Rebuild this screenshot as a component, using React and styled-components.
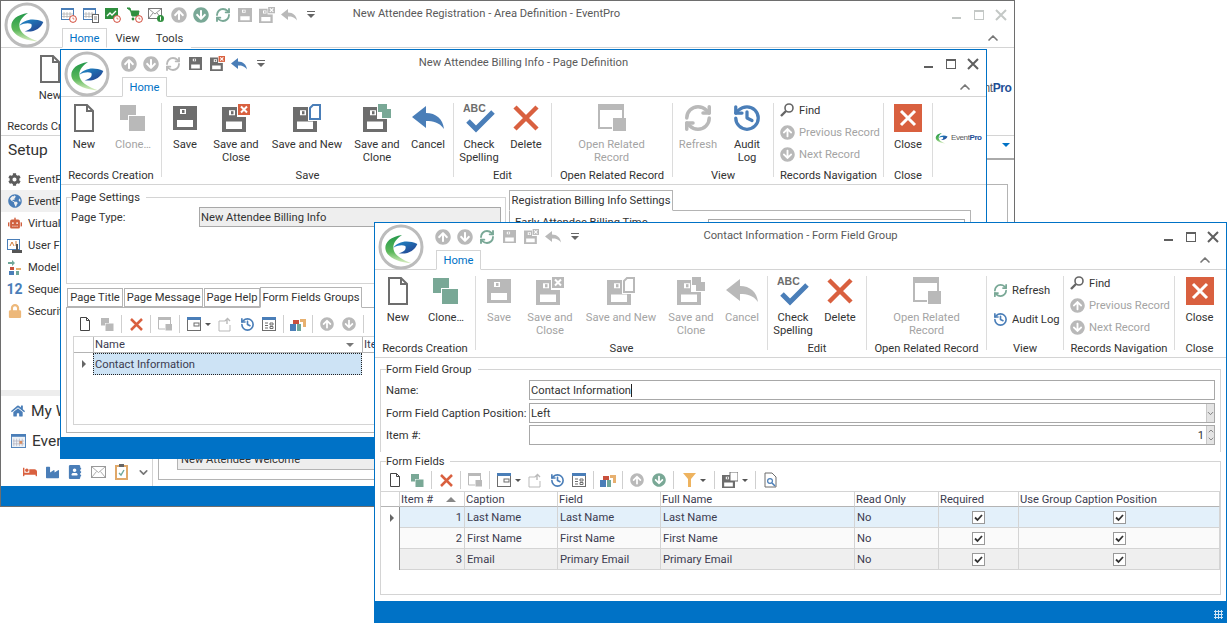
import React from "react";
import styled, { createGlobalStyle } from "styled-components";
import { RefreshCw, History, ChevronUp, ChevronDown } from "lucide-react";
import {
	FaArrowCircleUp,
	FaArrowCircleDown,
	FaCog,
	FaGlobeAmericas,
	FaRobot,
	FaLock,
	FaHome,
	FaBed,
	FaIndustry,
	FaAddressBook,
} from "react-icons/fa";

const BLUE = "#0072c6";
const DARK = "#6d6d6d";
const OFF = "#b9b9b9";
const STEEL = "#4a7eb8";
const TEAL = "#79a896";
const RED = "#d9603f";

const GlobalStyle = createGlobalStyle`
	html, body {
		margin: 0;
		padding: 0;
		background: #fff;
	}
	body {
		font-family: Roboto, "Open Sans", sans-serif;
		font-size: 11.2px;
		color: #333;
	}
	* {
		box-sizing: border-box;
	}
`;

const Desktop = styled.div`
	position: relative;
	width: 1227px;
	height: 623px;
	overflow: hidden;
	background: #fff;
`;

const Window = styled.div`
	position: absolute;
	left: ${(p) => p.$left}px;
	top: ${(p) => p.$top}px;
	width: ${(p) => p.$width}px;
	height: ${(p) => p.$height}px;
	display: flex;
	flex-direction: column;
	background: #fff;
	border: 1px solid ${(p) => (p.$active ? BLUE : "#6e6e6e")};
	overflow: hidden;
`;

const LogoSpot = styled.div`
	position: absolute;
	left: 3px;
	top: 1px;
	width: 46px;
	height: 46px;
`;

const TitleRow = styled.div`
	flex: none;
	height: 27px;
	display: grid;
	grid-template-columns: 1fr auto 1fr;
	align-items: center;
`;

const QuickBar = styled.div`
	display: flex;
	align-items: center;
	padding-left: 57px;
`;

const QuickSlot = styled.div`
	width: 22px;
	height: 22px;
	display: flex;
	align-items: center;
	justify-content: center;
`;

const Title = styled.div`
	color: #5a5a5a;
	padding-right: ${(p) => p.$shift || 0}px;
	padding-bottom: 2px;
	white-space: nowrap;
`;

const WinButtons = styled.div`
	display: flex;
	justify-content: flex-end;
	padding-right: 2px;
`;

const TabRow = styled.div`
	flex: none;
	height: 20px;
	display: flex;
	align-items: flex-end;
	padding-left: ${(p) => p.$left || 61}px;
	padding-right: 13px;
	border-bottom: 1px solid #d4d4d4;
`;

const RibbonTab = styled.div`
	height: 20px;
	width: ${(p) => p.$w}px;
	margin-bottom: -1px;
	display: flex;
	align-items: center;
	justify-content: center;
	background: #fff;
	color: ${(p) => (p.$on ? BLUE : "#333")};
	border: 1px solid ${(p) => (p.$on ? "#d4d4d4" : "transparent")};
	border-bottom: 1px solid ${(p) => (p.$on ? "#fff" : "transparent")};
`;

const Collapse = styled.div`
	margin-left: auto;
	align-self: center;
	display: flex;
	color: #777;
`;

const Ribbon = styled.div`
	flex: none;
	height: 88px;
	display: flex;
	border-bottom: 1px solid #d4d4d4;
`;

const Group = styled.div`
	flex: none;
	width: ${(p) => p.$w}px;
	display: flex;
	flex-direction: column;
`;

const GroupItems = styled.div`
	height: 72px;
	display: flex;
`;

const GroupLabel = styled.div`
	height: 13px;
	line-height: 13px;
	text-align: center;
	white-space: nowrap;
`;

const GroupSep = styled.div`
	flex: none;
	width: 1px;
	height: 74px;
	margin-top: 6px;
	background: #dcdcdc;
`;

const BigButton = styled.div`
	flex: none;
	width: ${(p) => p.$w}px;
	padding-top: 6px;
	display: flex;
	flex-direction: column;
	align-items: center;
	color: ${(p) => (p.$off ? "#a4a4a4" : "#333")};
`;

const BigIcon = styled.div`
	height: 30px;
	display: flex;
	align-items: center;
	justify-content: center;
`;

const BigText = styled.div`
	margin-top: 5px;
	line-height: 13px;
	text-align: center;
	white-space: pre-line;
`;

const Stack = styled.div`
	display: flex;
	flex-direction: column;
	gap: ${(p) => p.$gap}px;
	padding-top: ${(p) => p.$top}px;
	padding-left: 5px;
`;

const SmallButton = styled.div`
	height: 22px;
	display: flex;
	align-items: center;
	gap: 4px;
	white-space: nowrap;
	color: ${(p) => (p.$off ? "#a4a4a4" : "#333")};
`;

const SmallIcon = styled.div`
	width: 16px;
	display: flex;
	justify-content: center;
`;

const BrandWrap = styled.div`
	margin-left: ${(p) => p.$left || 0}px;
	display: flex;
	align-items: center;
	gap: 1px;
	height: 80px;
	flex: none;
`;

const BrandText = styled.span`
	font-family: "Liberation Sans", sans-serif;
	font-size: ${(p) => p.$size}px;
	letter-spacing: -0.4px;
	color: #5b5b5b;
	b {
		color: #1f4f96;
	}
`;

const Body = styled.div`
	flex: 1;
	min-height: 0;
	position: relative;
	overflow: hidden;
	display: flex;
`;

const StatusBar = styled.div`
	flex: none;
	height: ${(p) => p.$h}px;
	background: ${BLUE};
	display: flex;
	align-items: flex-end;
	justify-content: flex-end;
	padding: 0 3px 3px 0;
`;

const Grip = styled.div`
	width: 9px;
	height: 9px;
	background-image: radial-gradient(#cfe4f5 1px, transparent 1.2px);
	background-size: 3px 3px;
`;

/* main window left nav */
const Nav = styled.div`
	flex: none;
	width: 152px;
	height: 100%;
	display: flex;
	flex-direction: column;
	border-right: 1px solid #d4d4d4;
`;

const NavTitle = styled.div`
	height: 32px;
	padding: 4px 0 0 7px;
	font-size: 15.5px;
	line-height: 20px;
`;

const NavItem = styled.div`
	height: 22px;
	display: flex;
	align-items: center;
	gap: 6px;
	padding-left: 6px;
	white-space: nowrap;
	background: ${(p) => (p.$on ? "#f0f0f0" : "transparent")};
`;

const NavIcon = styled.div`
	width: 15px;
	display: flex;
	justify-content: center;
	font-weight: 700;
	font-size: 14px;
	color: ${STEEL};
`;

const NavSplit = styled.div`
	margin-top: auto;
	height: 6px;
	background: #ededed;
`;

const NavLink = styled.div`
	height: 30px;
	display: flex;
	align-items: center;
	gap: 6px;
	padding-left: 10px;
	font-size: 15.5px;
`;

const Tray = styled.div`
	height: 28px;
	margin-top: 2px;
	padding-left: 22px;
	display: flex;
	align-items: center;
	gap: 9px;
`;

const MainPane = styled.div`
	flex: 1;
	display: flex;
	flex-direction: column;
	min-width: 0;
`;

const PaneHeader = styled.div`
	height: 24px;
	padding: 7px 4px 0 0;
	display: flex;
	justify-content: flex-end;
	border-bottom: 2px solid #aaa;
`;

const Arrow = styled.div`
	width: 0;
	height: 0;
	border-left: ${(p) => p.$s}px solid transparent;
	border-right: ${(p) => p.$s}px solid transparent;
	border-top: ${(p) => p.$s}px solid ${(p) => p.$c || "#555"};
`;

const PaneBox = styled.div`
	flex: 1;
	margin: 24px 6px 6px 5px;
	border: 1px solid #b4b4b4;
	display: flex;
	flex-direction: column;
	justify-content: flex-end;
	padding: 0 18px 9px;
`;

const FlatField = styled.div`
	height: 20px;
	padding-left: 3px;
	line-height: 18px;
	border: 1px solid #b4b4b4;
	background: #eee;
	white-space: nowrap;
	overflow: hidden;
`;

/* forms */
const Columns = styled.div`
	display: flex;
	width: 100%;
`;

const LeftColumn = styled.div`
	flex: none;
	width: 445px;
	padding: 6px 0 0 5px;
	display: flex;
	flex-direction: column;
`;

const RightColumn = styled.div`
	flex: none;
	width: 462px;
	margin-left: 3px;
	padding-top: 5px;
`;

const Box = styled.fieldset`
	margin: 0;
	padding: ${(p) => p.$pad || "0 5px"};
	min-width: 0;
	height: ${(p) => p.$h}px;
	border: 1px solid #d4d4d4;
	border-bottom: ${(p) => (p.$open ? "none" : "1px solid #d4d4d4")};
	legend {
		padding: 0 6px 0 0;
		margin-left: ${(p) => p.$lg || 0}px;
		line-height: 13px;
	}
`;

const FieldRow = styled.div`
	display: grid;
	grid-template-columns: ${(p) => p.$label}px 1fr;
	align-items: center;
	height: ${(p) => p.$h || 20}px;
	margin-top: ${(p) => p.$before || 0}px;
	margin-bottom: ${(p) => p.$after || 0}px;
`;

const Input = styled.div`
	height: 20px;
	display: flex;
	align-items: center;
	padding-left: 1px;
	border: 1px solid #a8a8a8;
	background: ${(p) => (p.$flat ? "#eee" : "#fff")};
	white-space: nowrap;
	overflow: hidden;
`;

const Caret = styled.span`
	display: inline-block;
	width: 1px;
	height: 13px;
	background: #222;
`;

const InputValue = styled.div`
	flex: 1;
	text-align: ${(p) => (p.$right ? "right" : "left")};
	padding-right: 2px;
`;

const SpinColumn = styled.div`
	flex: none;
	width: 8px;
	height: 100%;
	background: #e4e4e4;
	border-left: 1px solid #c8c8c8;
	display: flex;
	flex-direction: column;
	align-items: center;
	justify-content: center;
	color: #777;
`;

const TabStrip = styled.div`
	display: flex;
	align-items: flex-end;
	height: 21px;
	margin-top: 2px;
	position: relative;
`;

const PageTab = styled.div`
	height: ${(p) => (p.$on ? 21 : 19)}px;
	width: ${(p) => p.$w}px;
	margin-left: ${(p) => (p.$on ? 0 : 1)}px;
	margin-bottom: ${(p) => (p.$on ? -1 : 0)}px;
	display: ${(p) => (p.$inline ? "inline-flex" : "flex")};
	align-items: center;
	justify-content: center;
	white-space: nowrap;
	background: #fff;
	border: 1px solid #b4b4b4;
	border-bottom: ${(p) => (p.$on ? "1px solid #fff" : "1px solid #b4b4b4")};
	position: relative;
	z-index: 1;
`;

const TabPanel = styled.div`
	height: ${(p) => p.$h}px;
	border: 1px solid #b4b4b4;
	padding: ${(p) => p.$pad || 0};
	overflow: hidden;
`;

const TinyBar = styled.div`
	display: flex;
	align-items: center;
	height: ${(p) => p.$h || 20}px;
	padding-left: ${(p) => p.$left || 0}px;
	margin-top: ${(p) => p.$top || 0}px;
`;

const Tool = styled.div`
	flex: none;
	width: ${(p) => p.$w || 22}px;
	display: flex;
	align-items: center;
	justify-content: center;
	gap: 4px;
`;

const ToolSep = styled.div`
	flex: none;
	width: 1px;
	height: 18px;
	margin: 0 3px;
	background: #cfcfcf;
`;

const DataGrid = styled.div`
	display: grid;
	margin-top: 1px;
	grid-template-columns: ${(p) => p.$cols};
	grid-template-rows: 16px;
	grid-auto-rows: ${(p) => p.$row}px;
`;

const HeadCell = styled.div`
	display: flex;
	align-items: center;
	justify-content: space-between;
	padding: 0 8px 0 1px;
	border-top: 1px solid #d4d4d4;
	border-bottom: 1px solid #b4b4b4;
	border-right: 1px solid #d4d4d4;
	white-space: nowrap;
	color: #3c3c50;
`;

const RowHead = styled.div`
	display: flex;
	align-items: center;
	padding-left: ${(p) => p.$inset || 9}px;
	border-right: ${(p) => (p.$plain ? "none" : "1px solid #8f8f8f")};
`;

const TriRight = styled.div`
	width: 0;
	height: 0;
	border-top: 4px solid transparent;
	border-bottom: 4px solid transparent;
	border-left: 4px solid #666;
`;

const TriUp = styled.div`
	width: 0;
	height: 0;
	border-left: 5px solid transparent;
	border-right: 5px solid transparent;
	border-bottom: 5px solid #888;
`;

const Cell = styled.div`
	display: flex;
	align-items: center;
	justify-content: ${(p) => p.$align || "flex-start"};
	padding: 0 2px;
	background: ${(p) => p.$bg};
	border-right: 1px solid #d4d4d4;
	border-bottom: 1px solid #d4d4d4;
	color: #3c3c50;
	white-space: nowrap;
`;

const Checkbox = styled.div`
	width: 13px;
	height: 13px;
	background: #fff;
	border: 1px solid #999;
	display: flex;
	align-items: center;
	justify-content: center;
`;

const OldGrid = styled.div`
	height: 89px;
	border: 1px solid #d4d4d4;
	margin: 2px 0 0 6px;
`;

const OldHead = styled.div`
	height: 16px;
	display: grid;
	grid-template-columns: 19px 269px 1fr;
	border-bottom: 1px solid #b4b4b4;
`;

const OldHeadCell = styled.div`
	display: flex;
	align-items: center;
	justify-content: space-between;
	padding: 0 8px 0 1px;
	border-left: ${(p) => (p.$first ? "none" : "1px solid #b4b4b4")};
	color: #3c3c50;
`;

const OldRow = styled.div`
	height: 22px;
	display: grid;
	grid-template-columns: 19px 269px 1fr;
`;

const OldSelected = styled.div`
	display: flex;
	align-items: center;
	padding-left: 2px;
	background: #cde3f5;
	outline: 1px dotted #222;
	outline-offset: -1px;
	color: #3c3c50;
`;

const FormBody = styled.div`
	flex: 1;
	padding: 5px 5px 0 5px;
	display: flex;
	flex-direction: column;
	gap: 3px;
`;

function Floppy({ c, x = 0, y = 0, w = 24, h = 24 }) {
	return (
		<g transform={`translate(${x} ${y}) scale(${w / 24} ${h / 24})`}>
			<path
				fill={c}
				fillRule="evenodd"
				d="M0 0H24V24H0Z M7 3V8H13V3Z M4 14V21H20V14Z"
			/>
			<rect x="9" y="4" width="2.5" height="3" fill={c} />
		</g>
	);
}

const SaveIcon = ({ c, s = 24 }) => (
	<svg width={s} height={s} viewBox="0 0 24 24">
		<Floppy c={c} />
	</svg>
);

const SaveCloseIcon = ({ c, badge, s = 28 }) => (
	<svg width={s} height={s} viewBox="0 0 28 28">
		<Floppy c={c} y="3" h="25" />
		<rect x="15" y="-1" width="14" height="14" fill="#fff" />
		<rect x="16" y="0" width="12" height="11" fill={badge} />
		<path d="M19 2.5L25 8.5M25 2.5L19 8.5" stroke="#fff" strokeWidth="2" />
	</svg>
);

const SaveNewIcon = ({ c, badge, s = 28 }) => (
	<svg width={s} height={s} viewBox="0 0 28 28">
		<Floppy c={c} y="3" h="25" />
		<rect x="15" y="-1" width="14" height="18" fill="#fff" />
		<path d="M17 4L20 1H27V15H17Z" fill="#fff" stroke={badge} strokeWidth="2" />
	</svg>
);

const SaveCloneIcon = ({ c, badge, s = 28 }) => (
	<svg width={s} height={s} viewBox="0 0 28 28">
		<Floppy c={c} y="3" h="25" />
		<rect x="14" y="-1" width="15" height="16" fill="#fff" />
		<rect x="15" y="0" width="9" height="8" fill={badge} />
		<rect x="19" y="5" width="9" height="9" fill={badge} />
	</svg>
);

const DocIcon = ({ s = 28, c = DARK }) => (
	<svg width={(s * 20) / 28} height={s} viewBox="0 0 20 28">
		<path
			d="M1 1H13L19 7V27H1Z M13 1V7H19"
			fill="#fff"
			stroke={c}
			strokeWidth="2"
		/>
	</svg>
);

const CloneIcon = ({ c, s = 26 }) => (
	<svg width={s} height={s} viewBox="0 0 26 26">
		<rect x="0" y="0" width="16" height="15" fill={c} />
		<rect x="8" y="10" width="16" height="16" fill="#fff" />
		<rect x="9" y="11" width="16" height="15" fill={c} />
	</svg>
);

const BackIcon = ({ c, s = 32 }) => (
	<svg width={s} height={(s * 24) / 32} viewBox="0 0 32 24">
		<path fill={c} d="M0 11L14 0V7C24 7 31 13 32 23C27 16 21 15 14 15V22Z" />
	</svg>
);

const SpellIcon = () => (
	<svg width="32" height="30" viewBox="0 0 32 30">
		<text
			x="0"
			y="9"
			fontFamily="Liberation Sans, sans-serif"
			fontSize="10.5"
			fontWeight="700"
			fill="#6d6d6d"
		>
			ABC
		</text>
		<path d="M5 18L13 26L30 9" fill="none" stroke={STEEL} strokeWidth="5" />
	</svg>
);

const CrossIcon = ({ s = 26, w = 4.5 }) => (
	<svg width={s} height={s} viewBox="0 0 26 26">
		<path d="M2 2L24 24M24 2L2 24" stroke={RED} strokeWidth={w} />
	</svg>
);

const RelatedIcon = ({ c = OFF, s = 28 }) => (
	<svg width={s} height={s} viewBox="0 0 28 28">
		<path fill={c} d="M0 0H26V6H0Z" />
		<path fill="none" stroke={c} strokeWidth="2" d="M1 6V24H14M25 6V14" />
		<rect x="15" y="14" width="13" height="13" fill={c} />
	</svg>
);

const CloseTile = () => (
	<svg width="28" height="28" viewBox="0 0 28 28">
		<rect width="28" height="28" fill={RED} />
		<path d="M7 7L21 21M21 7L7 21" stroke="#fff" strokeWidth="3" />
	</svg>
);

const FindIcon = ({ c = "#666" }) => (
	<svg width="14" height="14" viewBox="0 0 14 14">
		<circle cx="9" cy="5" r="4" fill="none" stroke={c} strokeWidth="1.6" />
		<path d="M6 8L1 13" stroke={c} strokeWidth="2.4" />
	</svg>
);

const MinIcon = ({ c }) => (
	<svg width="22" height="22" viewBox="0 0 22 22">
		<rect x="6" y="13" width="9" height="2" fill={c} />
	</svg>
);

const MaxIcon = ({ c }) => (
	<svg width="22" height="22" viewBox="0 0 22 22">
		<rect x="6.5" y="6.5" width="9" height="9" fill="none" stroke={c} />
		<rect x="6" y="6" width="10" height="2" fill={c} />
	</svg>
);

const ShutIcon = ({ c }) => (
	<svg width="22" height="22" viewBox="0 0 22 22">
		<path d="M6 6L16 16M16 6L6 16" stroke={c} strokeWidth="2" />
	</svg>
);

const SmallDrop = () => (
	<svg width="8" height="8" viewBox="0 0 8 8">
		<rect x="0" y="0" width="8" height="1" fill="#666" />
		<path d="M0 3H8L4 7Z" fill="#666" />
	</svg>
);

const WindowTool = ({ c = DARK }) => (
	<svg width="14" height="14" viewBox="0 0 14 14">
		<rect x="0.5" y="0.5" width="13" height="13" fill="#fff" stroke={c} />
		<rect x="0" y="0" width="14" height="3" fill={STEEL} />
		<rect x="7" y="6" width="5" height="3" fill="none" stroke={c} />
	</svg>
);

const ExportTool = ({ c = OFF }) => (
	<svg width="15" height="15" viewBox="0 0 15 15">
		<path d="M1 4H7M1 4V14H12V8" fill="none" stroke={c} />
		<path d="M9 7V2M7 4L9.5 1.5L12 4" fill="none" stroke={c} strokeWidth="1.4" />
	</svg>
);

const LayoutTool = () => (
	<svg width="14" height="14" viewBox="0 0 14 14">
		<rect x="0.5" y="0.5" width="13" height="13" fill="#fff" stroke={DARK} />
		<rect x="0" y="0" width="14" height="3" fill={STEEL} />
		<path d="M3 6H6M3 8.5H6M3 11H6M8 6H11V8H8ZM8 9.5H11V11.5H8Z" fill="none" stroke={DARK} />
	</svg>
);

const ColorTool = () => (
	<svg width="16" height="13" viewBox="0 0 16 13">
		<rect x="0" y="6" width="6" height="7" fill={STEEL} />
		<rect x="3" y="2" width="6" height="4" fill="#c9503c" />
		<rect x="7" y="6" width="4" height="7" fill="#6fa79a" />
		<path d="M10 1H16V9H13V4H10Z" fill="#e7b06f" />
	</svg>
);

const FilterTool = () => (
	<svg width="13" height="14" viewBox="0 0 13 14">
		<path d="M0 0H13L8 6V14H5V6Z" fill="#eeb35f" />
	</svg>
);

const SaveLayoutTool = () => (
	<svg width="16" height="16" viewBox="0 0 16 16">
		<Floppy c={DARK} y="3" w="13" h="13" />
		<rect x="8" y="0" width="8" height="9" fill="#fff" stroke={DARK} />
	</svg>
);

const PreviewTool = () => (
	<svg width="13" height="16" viewBox="0 0 13 16">
		<path d="M1 1H8L12 5V15H1Z" fill="#fff" stroke={DARK} />
		<circle cx="6" cy="9" r="2.4" fill="none" stroke={STEEL} strokeWidth="1.2" />
		<path d="M8 11L11 14" stroke={STEEL} strokeWidth="1.6" />
	</svg>
);

const CalendarClock = ({ frame = STEEL }) => (
	<svg width="16" height="16" viewBox="0 0 16 16">
		<rect x="0.5" y="1.5" width="12" height="11" fill="#fff" stroke={frame} />
		<rect x="0" y="1" width="13" height="2" fill={frame} />
		<path d="M3 5V11M6 5V11M9 5V11M1 7H12M1 9.5H12" stroke="#aaa" strokeWidth="0.7" />
		<circle cx="12" cy="12" r="3.4" fill="#fff" stroke="#d24b3a" />
		<path d="M12 10.4V12H13.4" fill="none" stroke="#d24b3a" strokeWidth="0.7" />
	</svg>
);

const CalendarSheet = () => (
	<svg width="16" height="16" viewBox="0 0 16 16">
		<rect x="0.5" y="1.5" width="12" height="11" fill="#fff" stroke={STEEL} />
		<rect x="0" y="1" width="13" height="2" fill={STEEL} />
		<path d="M3 5V11M6 5V11M9 5V11M1 7H12M1 9.5H12" stroke="#aaa" strokeWidth="0.7" />
		<rect x="9.5" y="7.5" width="6" height="8" fill="#fff" stroke="#666" />
		<path d="M11 10H14M11 12H14" stroke="#666" strokeWidth="0.8" />
	</svg>
);

const ChartClock = () => (
	<svg width="16" height="16" viewBox="0 0 16 16">
		<rect x="0" y="1" width="13" height="11" fill="#2f8f3e" />
		<path d="M2 9L5 6L7 8L11 4" fill="none" stroke="#fff" strokeWidth="1.3" />
		<circle cx="12" cy="12" r="3.4" fill="#fff" stroke="#d24b3a" />
		<path d="M12 10.4V12H13.4" fill="none" stroke="#d24b3a" strokeWidth="0.7" />
	</svg>
);

const CartClock = () => (
	<svg width="16" height="16" viewBox="0 0 16 16">
		<path d="M0 1H3L5 9H11L12 4H4Z" fill="#2f8f3e" stroke="#2f8f3e" />
		<circle cx="6" cy="12" r="1.4" fill="#2f8f3e" />
		<circle cx="12" cy="12" r="3.4" fill="#fff" stroke="#d24b3a" />
		<path d="M12 10.4V12H13.4" fill="none" stroke="#d24b3a" strokeWidth="0.7" />
	</svg>
);

const MailBadge = () => (
	<svg width="18" height="16" viewBox="0 0 18 16">
		<rect x="0.5" y="1.5" width="13" height="10" fill="#fff" stroke="#777" />
		<path d="M1 2L7 7L13 2M1 11L5 6M13 11L9 6" fill="none" stroke="#777" strokeWidth="0.8" />
		<circle cx="12.5" cy="11.5" r="3.5" fill="#2f8f3e" />
		<path d="M12.5 9.5V13.5" stroke="#fff" />
	</svg>
);

const UserFieldIcon = () => (
	<svg width="15" height="15" viewBox="0 0 15 15">
		<rect x="0.5" y="1.5" width="12" height="10" fill="#fff" stroke={STEEL} />
		<path d="M3 8L5 4L7 8M9 3V8" fill="none" stroke="#d27c3a" />
		<path d="M9 6V12H5V15H15V12H11V6Z" fill="#555" />
	</svg>
);

const ModelIcon = () => (
	<svg width="15" height="15" viewBox="0 0 15 15">
		<path d="M1 2H5V0L8 3L5 6V4H1Z" fill="#6fa79a" />
		<rect x="2" y="11" width="5" height="4" fill={STEEL} />
		<rect x="3" y="7" width="4" height="3" fill="#c9503c" />
		<rect x="9" y="8" width="5" height="2" fill="#e7b06f" />
		<rect x="9" y="11" width="3" height="4" fill="#6fa79a" />
	</svg>
);

const GridCalIcon = () => (
	<svg width="15" height="14" viewBox="0 0 16 15">
		<rect x="0.5" y="0.5" width="15" height="14" fill="#eef2f6" stroke={STEEL} />
		<rect x="0" y="0" width="16" height="3" fill={STEEL} />
		<path d="M3 5V13M6 5V13M9 5V13M12 5V13M2 7.5H14M2 10.5H14" stroke="#aab" strokeWidth="0.7" />
		<rect x="9" y="7.5" width="3" height="3" fill="#d98c5f" />
	</svg>
);

const TrayMail = () => (
	<svg width="15" height="12" viewBox="0 0 15 12">
		<rect x="0.5" y="0.5" width="14" height="11" fill="#fff" stroke="#999" />
		<path d="M1 1L7.5 6.5L14 1M1 11L5.5 5.5M14 11L9.5 5.5" fill="none" stroke="#999" strokeWidth="0.8" />
	</svg>
);

const TrayClip = () => (
	<svg width="13" height="16" viewBox="0 0 13 16">
		<rect x="1" y="2" width="11" height="13" fill="#fff" stroke="#e0a868" strokeWidth="2" />
		<rect x="4" y="0" width="5" height="3" fill="#666" />
		<path d="M4 9L6 11L9 6" fill="none" stroke="#6fa79a" strokeWidth="1.4" />
	</svg>
);

const Tick = () => (
	<svg width="11" height="11" viewBox="0 0 11 11">
		<path d="M2 5.5L4.5 8L9 3" fill="none" stroke="#333" strokeWidth="1.8" />
	</svg>
);

const LogoMark = ({ s = 46, ring = true, id }) => (
	<svg width={s} height={s} viewBox="0 0 138 138">
		<defs>
			<linearGradient id={`g${id}`} x1="0" y1="0" x2="0" y2="1">
				<stop offset="0" stopColor="#23984a" />
				<stop offset="0.6" stopColor="#5cb85a" />
				<stop offset="1" stopColor="#dcefc4" />
			</linearGradient>
			<linearGradient id={`b${id}`} x1="0" y1="0" x2="1" y2="1">
				<stop offset="0" stopColor="#1d8cc8" />
				<stop offset="1" stopColor="#263c8c" />
			</linearGradient>
		</defs>
		{ring && <circle cx="69" cy="69" r="63" fill="#fff" stroke="#bcbcbc" strokeWidth="9" />}
		<path
			fill={`url(#g${id})`}
			d="M72 33C38 38 22 54 22 72C22 95 55 116 102 118C72 108 46 92 46 71C46 55 58 42 72 33Z"
		/>
		<path
			fill={`url(#b${id})`}
			d="M46 71C60 54 86 46 118 60C110 80 90 92 62 88C78 84 86 76 82 66C72 62 60 64 46 71Z"
		/>
	</svg>
);

const Brand = ({ size, mark, left, id }) => (
	<BrandWrap $left={left}>
		<LogoMark s={mark} ring={false} id={id} />
		<BrandText $size={size}>
			Event<b>Pro</b>
		</BrandText>
	</BrandWrap>
);

const up = (c = OFF, s = 16) => <FaArrowCircleUp size={s} color={c} />;
const down = (c = OFF, s = 16) => <FaArrowCircleDown size={s} color={c} />;

const Ring = ({ c, s = 16 }) => <RefreshCw size={s} color={c} strokeWidth={2.8} />;

const Big = ({ w, off, icon, label }) => (
	<BigButton $w={w} $off={off}>
		<BigIcon>{icon}</BigIcon>
		<BigText>{label}</BigText>
	</BigButton>
);

const Small = ({ off, icon, label }) => (
	<SmallButton $off={off}>
		<SmallIcon>{icon}</SmallIcon>
		{label}
	</SmallButton>
);

const Chrome = ({ quick, title, shift, active, id, tabs, children }) => {
	const c = active ? "#5f5f5f" : "#c4c8c6";
	return (
		<>
			<TitleRow>
				<QuickBar>
					{quick.map((q, i) => (
						<QuickSlot key={i}>{q}</QuickSlot>
					))}
				</QuickBar>
				<Title $shift={shift}>{title}</Title>
				<WinButtons>
					<MinIcon c={c} />
					<MaxIcon c={c} />
					<ShutIcon c={c} />
				</WinButtons>
			</TitleRow>
			<TabRow>
				{tabs}
				<Collapse>
					<ChevronUp size={16} strokeWidth={2.5} />
				</Collapse>
			</TabRow>
			{children}
			<LogoSpot>
				<LogoMark id={id} />
			</LogoSpot>
		</>
	);
};

const homeTab = (
	<RibbonTab $on $w={45}>
		Home
	</RibbonTab>
);

const MainWindow = () => (
	<Window $left={0} $top={0} $width={1015} $height={507}>
		<Chrome
			id="a"
			shift={42}
			title="New Attendee Registration - Area Definition - EventPro"
			tabs={
				<>
					{homeTab}
					<RibbonTab $w={41}>View</RibbonTab>
					<RibbonTab $w={43}>Tools</RibbonTab>
				</>
			}
			quick={[
				<CalendarClock />,
				<CalendarSheet />,
				<ChartClock />,
				<CartClock />,
				<MailBadge />,
				up(),
				down(TEAL),
				<Ring c={TEAL} />,
				<SaveIcon c={OFF} s={14} />,
				<SaveCloseIcon c={OFF} badge={OFF} s={16} />,
				<BackIcon c={OFF} s={16} />,
				<SmallDrop />,
			]}
		>
			<Ribbon>
				<Group $w={98}>
					<GroupItems>
						<Big w={98} icon={<DocIcon />} label="New" />
					</GroupItems>
					<GroupLabel>Records Creation</GroupLabel>
				</Group>
				<Brand size={12} mark={22} left={842} id="a2" />
			</Ribbon>
			<Body>
				<Nav>
					<NavTitle>Setup</NavTitle>
					<NavItem>
						<NavIcon>
							<FaCog size={13} color="#5c5c5c" />
						</NavIcon>
						EventPro
					</NavItem>
					<NavItem $on>
						<NavIcon>
							<FaGlobeAmericas size={14} color={STEEL} />
						</NavIcon>
						EventPro
					</NavItem>
					<NavItem>
						<NavIcon>
							<FaRobot size={14} color="#d0603f" />
						</NavIcon>
						Virtual
					</NavItem>
					<NavItem>
						<NavIcon>
							<UserFieldIcon />
						</NavIcon>
						User Fields
					</NavItem>
					<NavItem>
						<NavIcon>
							<ModelIcon />
						</NavIcon>
						Model
					</NavItem>
					<NavItem>
						<NavIcon>12</NavIcon>
						Sequences
					</NavItem>
					<NavItem>
						<NavIcon>
							<FaLock size={14} color="#edb87a" />
						</NavIcon>
						Security
					</NavItem>
					<NavSplit />
					<NavLink>
						<FaHome size={14} color={STEEL} />
						My Work
					</NavLink>
					<NavLink>
						<GridCalIcon />
						Events
					</NavLink>
					<Tray>
						<FaBed size={14} color="#d9603f" />
						<FaIndustry size={13} color={STEEL} />
						<FaAddressBook size={14} color={STEEL} />
						<TrayMail />
						<TrayClip />
						<ChevronDown size={13} color="#777" strokeWidth={3} />
					</Tray>
				</Nav>
				<MainPane>
					<PaneHeader>
						<Arrow $s={4} $c={BLUE} />
					</PaneHeader>
					<PaneBox>
						<FlatField>New Attendee Welcome</FlatField>
					</PaneBox>
				</MainPane>
			</Body>
			<StatusBar $h={20} />
		</Chrome>
	</Window>
);

const ToolRow = ({ clone, downColor, extras, left, top, h }) => (
	<TinyBar $left={left} $top={top} $h={h}>
		<Tool>
			<DocIcon s={14} c="#444" />
		</Tool>
		<Tool>
			<CloneIcon c={clone} s={13} />
		</Tool>
		<ToolSep />
		<Tool>
			<CrossIcon s={13} w={5} />
		</Tool>
		<ToolSep />
		<Tool>
			<RelatedIcon s={14} />
		</Tool>
		<ToolSep />
		<Tool $w={31}>
			<WindowTool />
			<Arrow $s={3} />
		</Tool>
		<Tool>
			<ExportTool />
		</Tool>
		<Tool>
			<History size={15} color={STEEL} strokeWidth={2.6} />
		</Tool>
		<Tool>
			<LayoutTool />
		</Tool>
		<ToolSep />
		<Tool>
			<ColorTool />
		</Tool>
		<ToolSep />
		<Tool>{up(OFF, 14)}</Tool>
		<Tool>{down(downColor, 14)}</Tool>
		<ToolSep />
		{extras}
	</TinyBar>
);

const BillingWindow = () => (
	<Window $active $left={60} $top={49} $width={927} $height={410}>
		<Chrome
			active
			id="b"
			title="New Attendee Billing Info - Page Definition"
			tabs={homeTab}
			quick={[
				up(),
				down(),
				<Ring c={OFF} />,
				<SaveIcon c={DARK} s={13} />,
				<SaveCloseIcon c={DARK} badge={RED} s={15} />,
				<BackIcon c={STEEL} s={16} />,
				<SmallDrop />,
			]}
		>
			<Ribbon>
				<Group $w={100}>
					<GroupItems>
						<Big w={46} icon={<DocIcon />} label="New" />
						<Big w={52} off icon={<CloneIcon c={OFF} />} label="Clone…" />
					</GroupItems>
					<GroupLabel>Records Creation</GroupLabel>
				</Group>
				<GroupSep />
				<Group $w={291}>
					<GroupItems>
						<Big w={46} icon={<SaveIcon c={DARK} />} label="Save" />
						<Big w={56} icon={<SaveCloseIcon c={DARK} badge={RED} />} label={"Save and\nClose"} />
						<Big w={86} icon={<SaveNewIcon c={DARK} badge={STEEL} />} label="Save and New" />
						<Big w={54} icon={<SaveCloneIcon c={DARK} badge={TEAL} />} label={"Save and\nClone"} />
						<Big w={48} icon={<BackIcon c={STEEL} />} label="Cancel" />
					</GroupItems>
					<GroupLabel>Save</GroupLabel>
				</Group>
				<GroupSep />
				<Group $w={97}>
					<GroupItems>
						<Big w={50} icon={<SpellIcon />} label={"Check\nSpelling"} />
						<Big w={44} icon={<CrossIcon />} label="Delete" />
					</GroupItems>
					<GroupLabel>Edit</GroupLabel>
				</Group>
				<GroupSep />
				<Group $w={120}>
					<GroupItems>
						<Big w={119} off icon={<RelatedIcon />} label={"Open Related\nRecord"} />
					</GroupItems>
					<GroupLabel>Open Related Record</GroupLabel>
				</Group>
				<GroupSep />
				<Group $w={100}>
					<GroupItems>
						<Big w={50} off icon={<Ring c={OFF} s={30} />} label="Refresh" />
						<Big w={48} icon={<History size={30} color={STEEL} strokeWidth={2.6} />} label={"Audit\nLog"} />
					</GroupItems>
					<GroupLabel>View</GroupLabel>
				</Group>
				<GroupSep />
				<Group $w={109}>
					<GroupItems>
						<Stack $gap={0} $top={2}>
							<Small icon={<FindIcon />} label="Find" />
							<Small off icon={up(OFF, 15)} label="Previous Record" />
							<Small off icon={down(OFF, 15)} label="Next Record" />
						</Stack>
					</GroupItems>
					<GroupLabel>Records Navigation</GroupLabel>
				</Group>
				<GroupSep />
				<Group $w={48}>
					<GroupItems>
						<Big w={48} icon={<CloseTile />} label="Close" />
					</GroupItems>
					<GroupLabel>Close</GroupLabel>
				</Group>
				<GroupSep />
				<Brand size={8} mark={17} id="b2" />
			</Ribbon>
			<Body>
				<Columns>
					<LeftColumn>
						<Box $h={93} $pad="0 4px">
							<legend>Page Settings</legend>
							<FieldRow $label={128} $before={3}>
								<span>Page Type:</span>
								<Input $flat>New Attendee Billing Info</Input>
							</FieldRow>
						</Box>
						<TabStrip>
							<PageTab $w={56}>Page Title</PageTab>
							<PageTab $w={79}>Page Message</PageTab>
							<PageTab $w={56}>Page Help</PageTab>
							<PageTab $on $w={102}>
								Form Fields Groups
							</PageTab>
						</TabStrip>
						<TabPanel $h={126}>
							<ToolRow left={7} top={6} h={20} clone={OFF} downColor={OFF} />
							<OldGrid>
								<OldHead>
									<OldHeadCell $first />
									<OldHeadCell>
										Name
										<Arrow $s={4} $c="#777" />
									</OldHeadCell>
									<OldHeadCell>Item #</OldHeadCell>
								</OldHead>
								<OldRow>
									<RowHead $plain $inset={8}>
										<TriRight />
									</RowHead>
									<OldSelected>Contact Information</OldSelected>
								</OldRow>
							</OldGrid>
						</TabPanel>
					</LeftColumn>
					<RightColumn>
						<PageTab $on $inline $w={164}>
							Registration Billing Info Settings
						</PageTab>
						<TabPanel $h={200} $pad="5px 5px 0 5px">
							<FieldRow $label={193}>
								<span>Early Attendee Billing Time Description:</span>
								<Input>Early Attendee billed from registration</Input>
							</FieldRow>
						</TabPanel>
					</RightColumn>
				</Columns>
			</Body>
			<StatusBar $h={21} />
		</Chrome>
	</Window>
);

const columns = "19px 65px 93px 103px 194px 84px 80px 1fr";
const rows = [
	{ no: 1, caption: "Last Name", field: "Last Name", full: "Last Name", bg: "#e3f0fa" },
	{ no: 2, caption: "First Name", field: "First Name", full: "First Name", bg: "#fafafa" },
	{ no: 3, caption: "Email", field: "Primary Email", full: "Primary Email", bg: "#efefef" },
];

const ContactWindow = () => (
	<Window $active $left={374} $top={222} $width={853} $height={401}>
		<Chrome
			active
			id="c"
			title="Contact Information - Form Field Group"
			tabs={homeTab}
			quick={[
				up(),
				down(),
				<Ring c={TEAL} />,
				<SaveIcon c={OFF} s={13} />,
				<SaveCloseIcon c={OFF} badge={OFF} s={15} />,
				<BackIcon c={OFF} s={16} />,
				<SmallDrop />,
			]}
		>
			<Ribbon>
				<Group $w={100}>
					<GroupItems>
						<Big w={46} icon={<DocIcon />} label="New" />
						<Big w={50} icon={<CloneIcon c={TEAL} />} label="Clone…" />
					</GroupItems>
					<GroupLabel>Records Creation</GroupLabel>
				</Group>
				<GroupSep />
				<Group $w={291}>
					<GroupItems>
						<Big w={46} off icon={<SaveIcon c={OFF} />} label="Save" />
						<Big w={56} off icon={<SaveCloseIcon c={OFF} badge={OFF} />} label={"Save and\nClose"} />
						<Big w={86} off icon={<SaveNewIcon c={OFF} badge={OFF} />} label="Save and New" />
						<Big w={54} off icon={<SaveCloneIcon c={OFF} badge={OFF} />} label={"Save and\nClone"} />
						<Big w={48} off icon={<BackIcon c={OFF} />} label="Cancel" />
					</GroupItems>
					<GroupLabel>Save</GroupLabel>
				</Group>
				<GroupSep />
				<Group $w={98}>
					<GroupItems>
						<Big w={50} icon={<SpellIcon />} label={"Check\nSpelling"} />
						<Big w={44} icon={<CrossIcon />} label="Delete" />
					</GroupItems>
					<GroupLabel>Edit</GroupLabel>
				</Group>
				<GroupSep />
				<Group $w={119}>
					<GroupItems>
						<Big w={119} off icon={<RelatedIcon />} label={"Open Related\nRecord"} />
					</GroupItems>
					<GroupLabel>Open Related Record</GroupLabel>
				</Group>
				<GroupSep />
				<Group $w={76}>
					<GroupItems>
						<Stack $gap={7} $top={9}>
							<Small icon={<Ring c={TEAL} s={15} />} label="Refresh" />
							<Small icon={<History size={15} color={STEEL} strokeWidth={2.6} />} label="Audit Log" />
						</Stack>
					</GroupItems>
					<GroupLabel>View</GroupLabel>
				</Group>
				<GroupSep />
				<Group $w={110}>
					<GroupItems>
						<Stack $gap={0} $top={2}>
							<Small icon={<FindIcon />} label="Find" />
							<Small off icon={up(OFF, 15)} label="Previous Record" />
							<Small off icon={down(OFF, 15)} label="Next Record" />
						</Stack>
					</GroupItems>
					<GroupLabel>Records Navigation</GroupLabel>
				</Group>
				<GroupSep />
				<Group $w={49}>
					<GroupItems>
						<Big w={49} icon={<CloseTile />} label="Close" />
					</GroupItems>
					<GroupLabel>Close</GroupLabel>
				</Group>
			</Ribbon>
			<Body>
				<FormBody>
					<Box $open $h={89}>
						<legend>Form Field Group</legend>
						<FieldRow $label={143} $before={4} $after={3}>
							<span>Name:</span>
							<Input>
								Contact Information
								<Caret />
							</Input>
						</FieldRow>
						<FieldRow $label={143} $after={2}>
							<span>Form Field Caption Position:</span>
							<Input>
								<InputValue>Left</InputValue>
								<SpinColumn>
									<ChevronDown size={9} strokeWidth={2.5} />
								</SpinColumn>
							</Input>
						</FieldRow>
						<FieldRow $label={143}>
							<span>Item #:</span>
							<Input>
								<InputValue $right>1</InputValue>
								<SpinColumn>
									<ChevronUp size={8} strokeWidth={2.5} />
									<ChevronDown size={8} strokeWidth={2.5} />
								</SpinColumn>
							</Input>
						</FieldRow>
					</Box>
					<Box $h={140} $pad="0" $lg={5}>
						<legend>Form Fields</legend>
						<ToolRow
							left={3}
							top={2}
							h={20}
							clone={TEAL}
							downColor={TEAL}
							extras={
								<>
									<Tool $w={34}>
										<FilterTool />
										<Arrow $s={3} />
									</Tool>
									<ToolSep />
									<Tool $w={34}>
										<SaveLayoutTool />
										<Arrow $s={3} />
									</Tool>
									<ToolSep />
									<Tool>
										<PreviewTool />
									</Tool>
								</>
							}
						/>
						<DataGrid $cols={columns} $row={21}>
							<HeadCell />
							<HeadCell>
								Item #
								<TriUp />
							</HeadCell>
							<HeadCell>Caption</HeadCell>
							<HeadCell>Field</HeadCell>
							<HeadCell>Full Name</HeadCell>
							<HeadCell>Read Only</HeadCell>
							<HeadCell>Required</HeadCell>
							<HeadCell>Use Group Caption Position</HeadCell>
							{rows.map((r) => (
								<React.Fragment key={r.no}>
									<RowHead>{r.no === 1 && <TriRight />}</RowHead>
									<Cell $bg={r.bg} $align="flex-end">
										{r.no}
									</Cell>
									<Cell $bg={r.bg}>{r.caption}</Cell>
									<Cell $bg={r.bg}>{r.field}</Cell>
									<Cell $bg={r.bg}>{r.full}</Cell>
									<Cell $bg={r.bg}>No</Cell>
									<Cell $bg={r.bg} $align="center">
										<Checkbox>
											<Tick />
										</Checkbox>
									</Cell>
									<Cell $bg={r.bg} $align="center">
										<Checkbox>
											<Tick />
										</Checkbox>
									</Cell>
								</React.Fragment>
							))}
						</DataGrid>
					</Box>
				</FormBody>
			</Body>
			<StatusBar $h={21}>
				<Grip />
			</StatusBar>
		</Chrome>
	</Window>
);

export default function App() {
	return (
		<Desktop>
			<GlobalStyle />
			<MainWindow />
			<BillingWindow />
			<ContactWindow />
		</Desktop>
	);
}
